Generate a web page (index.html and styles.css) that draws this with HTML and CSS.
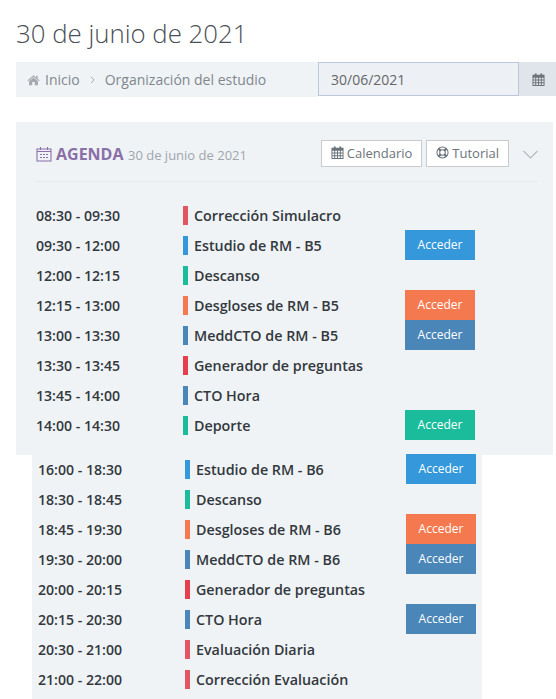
FILE: index.html
```html
<!DOCTYPE html>
<html lang="es">
<head>
  <meta charset="UTF-8">
  <title>Organización del estudio</title>
  <link rel="stylesheet" href="styles.css">
</head>
<body>
  <h1 class="page-title">30 de junio de 2021</h1>
  <div class="top-bar">
    <div class="breadcrumb">
      <svg class="home-icon" viewBox="0 0 14 12"><path d="M7 1 L0.4 6.6 L1.1 7.4 L7 2.5 L12.9 7.4 L13.6 6.6 L11.4 4.7 V1.4 H9.8 V3.4 Z M7 3.4 L2.2 7.4 V11.6 H5.6 V8.2 H8.4 V11.6 H11.8 V7.4 Z"/></svg>
      <span>Inicio</span>
      <svg class="crumb-sep" viewBox="0 0 6 10"><path d="M1 1 L5 5 L1 9" fill="none" stroke="#9aa2aa" stroke-width="1.1"/></svg>
      <span>Organización del estudio</span>
    </div>
    <div class="date-field">30/06/2021</div>
    <div class="date-addon">
      <svg class="cal-icon" viewBox="0 0 14 14"><path fill-rule="evenodd" d="M3 0.5 H5 V2 H9 V0.5 H11 V2 H13.5 V14 H0.5 V2 H3 Z M1.5 5 V7 H3.5 V5 Z M4.5 5 V7 H6.5 V5 Z M7.5 5 V7 H9.5 V5 Z M10.5 5 V7 H12.5 V5 Z M1.5 8 V10 H3.5 V8 Z M4.5 8 V10 H6.5 V8 Z M7.5 8 V10 H9.5 V8 Z M10.5 8 V10 H12.5 V8 Z M1.5 11 V13 H3.5 V11 Z M4.5 11 V13 H6.5 V11 Z M7.5 11 V13 H9.5 V11 Z M10.5 11 V13 H12.5 V11 Z"/></svg>
    </div>
  </div>

  <div class="panel panel-main">
    <div class="panel-head">
      <svg class="agenda-icon" viewBox="0 0 16 16"><path d="M1 3 H15 V15 H1 Z M1 5.5 H15 M4.5 1 V4 M11.5 1 V4" fill="none" stroke="#8a6fa8" stroke-width="1.1"/><path d="M4 8 H6 V9 H4 Z M7 8 H9 V9 H7 Z M10 8 H12 V9 H10 Z M4 11 H6 V12 H4 Z M7 11 H9 V12 H7 Z M10 11 H12 V12 H10 Z" fill="#8a6fa8"/></svg>
      <span class="agenda-title">AGENDA</span>
      <span class="agenda-date">30 de junio de 2021</span>
      <div class="head-actions">
        <a class="btn-light">
          <svg class="cal-icon" viewBox="0 0 14 14"><path fill-rule="evenodd" d="M3 0.5 H5 V2 H9 V0.5 H11 V2 H13.5 V14 H0.5 V2 H3 Z M1.5 5 V7 H3.5 V5 Z M4.5 5 V7 H6.5 V5 Z M7.5 5 V7 H9.5 V5 Z M10.5 5 V7 H12.5 V5 Z M1.5 8 V10 H3.5 V8 Z M4.5 8 V10 H6.5 V8 Z M7.5 8 V10 H9.5 V8 Z M10.5 8 V10 H12.5 V8 Z M1.5 11 V13 H3.5 V11 Z M4.5 11 V13 H6.5 V11 Z M7.5 11 V13 H9.5 V11 Z M10.5 11 V13 H12.5 V11 Z"/></svg>
          Calendario
        </a>
        <a class="btn-light">
          <svg class="ring-icon" viewBox="0 0 14 14"><circle cx="7" cy="7" r="6" fill="none" stroke="#6b737b" stroke-width="1.1"/><circle cx="7" cy="7" r="3" fill="none" stroke="#6b737b" stroke-width="1.1"/><path d="M2.8 2.8 L4.9 4.9 M11.2 2.8 L9.1 4.9 M2.8 11.2 L4.9 9.1 M11.2 11.2 L9.1 9.1" stroke="#6b737b" stroke-width="2.4"/></svg>
          Tutorial
        </a>
        <svg class="chevron" viewBox="0 0 15 9"><path d="M0.5 1 L7.5 8 L14.5 1" fill="none" stroke="#b4b9be" stroke-width="1.2"/></svg>
      </div>
    </div>
    <div class="rows">
      <div class="row"><span class="time">08:30 - 09:30</span><span class="bar red"></span><span class="name">Corrección Simulacro</span></div>
      <div class="row"><span class="time">09:30 - 12:00</span><span class="bar blue"></span><span class="name">Estudio de RM - B5</span><a class="go blue">Acceder</a></div>
      <div class="row"><span class="time">12:00 - 12:15</span><span class="bar green"></span><span class="name">Descanso</span></div>
      <div class="row"><span class="time">12:15 - 13:00</span><span class="bar orange"></span><span class="name">Desgloses de RM - B5</span><a class="go orange">Acceder</a></div>
      <div class="row"><span class="time">13:00 - 13:30</span><span class="bar steel"></span><span class="name">MeddCTO de RM - B5</span><a class="go steel">Acceder</a></div>
      <div class="row"><span class="time">13:30 - 13:45</span><span class="bar crimson"></span><span class="name">Generador de preguntas</span></div>
      <div class="row"><span class="time">13:45 - 14:00</span><span class="bar steel"></span><span class="name">CTO Hora</span></div>
      <div class="row"><span class="time">14:00 - 14:30</span><span class="bar green"></span><span class="name">Deporte</span><a class="go green">Acceder</a></div>
    </div>
  </div>

  <div class="panel panel-next">
    <div class="row"><span class="time">16:00 - 18:30</span><span class="bar blue"></span><span class="name">Estudio de RM - B6</span><a class="go blue">Acceder</a></div>
    <div class="row"><span class="time">18:30 - 18:45</span><span class="bar green"></span><span class="name">Descanso</span></div>
    <div class="row"><span class="time">18:45 - 19:30</span><span class="bar orange"></span><span class="name">Desgloses de RM - B6</span><a class="go orange">Acceder</a></div>
    <div class="row"><span class="time">19:30 - 20:00</span><span class="bar steel"></span><span class="name">MeddCTO de RM - B6</span><a class="go steel">Acceder</a></div>
    <div class="row"><span class="time">20:00 - 20:15</span><span class="bar crimson"></span><span class="name">Generador de preguntas</span></div>
    <div class="row"><span class="time">20:15 - 20:30</span><span class="bar steel"></span><span class="name">CTO Hora</span><a class="go steel">Acceder</a></div>
    <div class="row"><span class="time">20:30 - 21:00</span><span class="bar red"></span><span class="name">Evaluación Diaria</span></div>
    <div class="row"><span class="time">21:00 - 22:00</span><span class="bar red"></span><span class="name">Corrección Evaluación</span></div>
  </div>
</body>
</html>
```

FILE: styles.css
```css
html, body {
  height: 699px;
  overflow: hidden;
}
body {
  margin: 0;
  background: #fff;
  font-family: "Open Sans", sans-serif;
  color: #333;
}
.page-title {
  margin: 0;
  padding: 15px 0 0 16px;
  height: 62px;
  box-sizing: border-box;
  font-size: 25.8px;
  line-height: 37px;
  font-weight: 300;
  color: #4a4f55;
}
.top-bar {
  display: flex;
  height: 35px;
  margin-left: 16px;
}
.breadcrumb {
  width: 302px;
  background: #eff3f6;
  display: flex;
  align-items: center;
  padding-left: 11px;
  box-sizing: border-box;
  font-size: 14px;
  color: #81878d;
}
.home-icon {
  width: 13px;
  height: 12px;
  fill: #a3a9af;
  margin-right: 5px;
}
.crumb-sep {
  width: 5px;
  height: 8px;
  margin: 0 10px;
}
.date-field {
  width: 201px;
  height: 34px;
  box-sizing: border-box;
  border: 1px solid #bcc8da;
  background: #edf0f5;
  padding-left: 12px;
  font-size: 14px;
  line-height: 34px;
  color: #666;
}
.date-addon {
  width: 37px;
  height: 34px;
  padding-left: 1px;
  box-sizing: border-box;
  background: #e0e5ec;
  display: flex;
  align-items: center;
  justify-content: center;
}
.cal-icon {
  width: 13px;
  height: 13px;
  fill: #6b737b;
}
.panel {
  background: #eff3f6;
}
.panel-main {
  width: 537px;
  height: 333px;
  margin: 25px 0 0 16px;
  padding: 18px 15px 0 20px;
  box-sizing: border-box;
}
.panel-head {
  display: flex;
  align-items: center;
  height: 27px;
  padding-bottom: 14px;
  border-bottom: 1px solid #e6eaee;
}
.agenda-icon {
  width: 16px;
  height: 16px;
  margin-right: 4px;
}
.agenda-title {
  font-size: 16px;
  font-weight: 700;
  color: #8a6fa8;
}
.agenda-date {
  font-size: 13px;
  color: #a0a6ac;
  margin-left: 4.5px;
  padding-top: 2px;
}
.head-actions {
  margin-left: auto;
  display: flex;
  align-items: center;
  gap: 4px;
}
.btn-light {
  height: 27px;
  box-sizing: border-box;
  border: 1px solid #c8cacc;
  background: #fff;
  display: flex;
  align-items: center;
  gap: 3px;
  padding: 0 9px 2px;
  font-size: 13px;
  color: #6b737b;
}
.ring-icon {
  width: 13px;
  height: 13px;
}
.chevron {
  width: 15px;
  height: 9px;
  margin: 2px 0 0 10px;
}
.rows {
  padding-top: 19px;
}
.panel-next {
  width: 450px;
  height: 244px;
  margin-left: 32px;
  padding-left: 6px;
  box-sizing: border-box;
}
.row {
  display: flex;
  align-items: center;
  height: 30px;
  font-size: 14px;
  font-weight: 600;
  color: #33383d;
}
.time {
  width: 147px;
  margin-top: -2px;
  font-size: 14.1px;
}
.bar {
  width: 5px;
  height: 19px;
  margin: -1px 6px 0 0;
}
.name {
  width: 211px;
  margin-top: -2px;
  font-size: 14.3px;
}
.go {
  width: 70px;
  height: 30px;
  margin-top: -2px;
  font-size: 12px;
  font-weight: 400;
  line-height: 29px;
  text-align: center;
  color: #fff;
}
.panel-next .name {
  width: 210px;
}
.red { background: #e25563; }
.blue { background: #3498db; }
.green { background: #1abc9c; }
.orange { background: #f5794f; }
.steel { background: #4a86b8; }
.crimson { background: #e53e4d; }
```
